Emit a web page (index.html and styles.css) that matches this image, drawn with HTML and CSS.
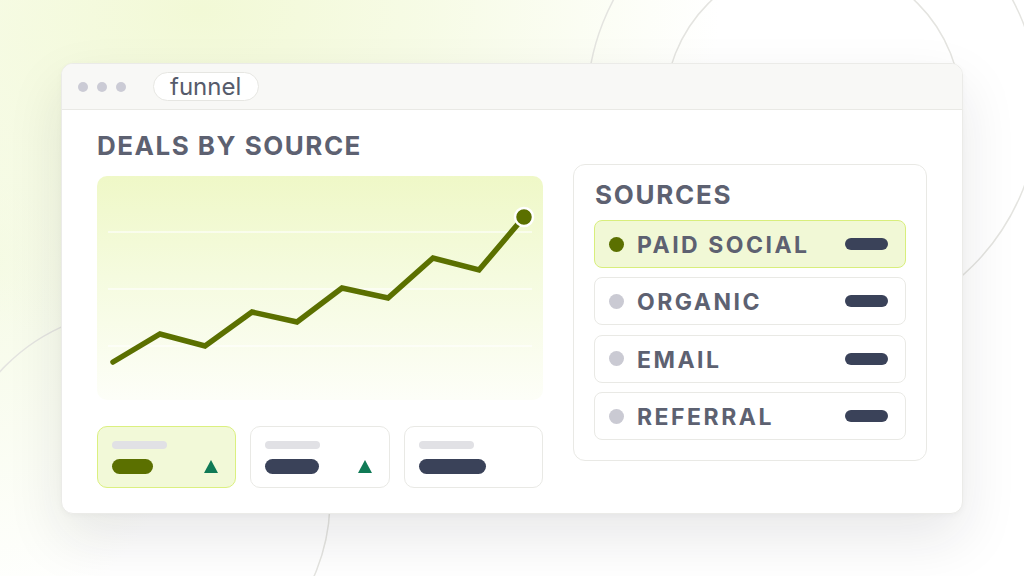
FILE: index.html
```html
<!DOCTYPE html>
<html lang="en">
<head>
<meta charset="utf-8">
<title>Deals by source</title>
<link rel="stylesheet" href="styles.css">
</head>
<body>
<svg class="bg-rings" width="1024" height="576" viewBox="0 0 1024 576" aria-hidden="true">
  <circle cx="813" cy="106" r="226" />
  <circle cx="813" cy="108" r="148" />
  <circle cx="140" cy="500" r="190" />
</svg>
<div class="stage">
  <div class="window">
    <div class="titlebar">
      <span class="dot"></span><span class="dot"></span><span class="dot"></span>
      <span class="tab">funnel</span>
    </div>
    <div class="body">
      <div class="left">
        <h1 class="heading">DEALS BY SOURCE</h1>
        <div class="chart">
          <svg width="446" height="224" viewBox="0 0 446 224">
            <line class="grid" x1="11" y1="56" x2="435" y2="56"/>
            <line class="grid" x1="11" y1="113" x2="435" y2="113"/>
            <line class="grid" x1="11" y1="170" x2="435" y2="170"/>
            <polyline class="trend" points="16,186 63,158 108,170 155,136 200,146 245,112 291,122 336,82 382,94 427,41"/>
            <circle class="end" cx="427" cy="41" r="9"/>
          </svg>
        </div>
        <div class="stats">
          <div class="stat active">
            <span class="stat-label"></span>
            <div class="stat-row"><span class="stat-value olive w41"></span><span class="up"></span></div>
          </div>
          <div class="stat">
            <span class="stat-label"></span>
            <div class="stat-row"><span class="stat-value w54"></span><span class="up"></span></div>
          </div>
          <div class="stat">
            <span class="stat-label"></span>
            <div class="stat-row"><span class="stat-value w67"></span></div>
          </div>
        </div>
      </div>
      <div class="panel">
        <h2 class="panel-title">SOURCES</h2>
        <ul class="sources">
          <li class="source active"><span class="bullet"></span><span class="name">PAID SOCIAL</span><span class="bar"></span></li>
          <li class="source"><span class="bullet"></span><span class="name">ORGANIC</span><span class="bar"></span></li>
          <li class="source"><span class="bullet"></span><span class="name">EMAIL</span><span class="bar"></span></li>
          <li class="source"><span class="bullet"></span><span class="name">REFERRAL</span><span class="bar"></span></li>
        </ul>
      </div>
    </div>
  </div>
</div>
</body>
</html>
```
FILE: styles.css
```css
* { box-sizing: border-box; }
html, body { margin: 0; padding: 0; }
body {
  width: 1024px;
  height: 576px;
  overflow: hidden;
  position: relative;
  font-family: Inter, "Noto Sans", "Liberation Sans", sans-serif;
  background:
    radial-gradient(ellipse 520px 340px at 200px 10px, #f2f9d6 0%, rgba(244,250,222,0.75) 45%, rgba(255,255,255,0) 100%),
    radial-gradient(ellipse 220px 360px at 0px 260px, rgba(244,250,226,0.85) 0%, rgba(255,255,255,0) 100%),
    #ffffff;
}
.bg-rings {
  position: absolute;
  left: 0;
  top: 0;
  z-index: 0;
}
.bg-rings circle {
  fill: none;
  stroke: #e4e4e0;
  stroke-width: 1.5;
}
.stage {
  position: relative;
  z-index: 1;
  padding: 63px 0 0 61px;
}
.window {
  width: 902px;
  height: 451px;
  background: #ffffff;
  border: 1px solid #ebebe8;
  border-radius: 12px;
  box-shadow: 0 24px 56px rgba(30, 30, 40, 0.10), 0 2px 6px rgba(30, 30, 40, 0.03);
  display: flex;
  flex-direction: column;
  overflow: hidden;
}
.titlebar {
  height: 46px;
  flex: none;
  background: #f8f8f6;
  border-bottom: 1px solid #e9e9e5;
  display: flex;
  align-items: center;
  padding-left: 16px;
  gap: 9px;
}
.dot {
  width: 10px;
  height: 10px;
  border-radius: 50%;
  background: #cbcbd5;
}
.tab {
  margin-left: 18px;
  height: 29px;
  padding: 0 17px 0 16px;
  border: 1.5px solid #e6e6e2;
  border-radius: 15px;
  background: #ffffff;
  font-size: 24px;
  line-height: 26px;
  color: #565b6b;
  display: flex;
  align-items: center;
}
.body {
  flex: 1;
  display: grid;
  grid-template-columns: 446px 354px;
  column-gap: 30px;
  padding: 0 35px;
}
.heading {
  margin: 20px 0 14px;
  font-size: 26px;
  line-height: 32px;
  font-weight: 700;
  letter-spacing: 1.5px;
  color: #5d6171;
}
.chart {
  height: 224px;
  border-radius: 10px;
  background: linear-gradient(180deg, #eff8c7 0%, #f5fbdf 45%, #fdfef8 100%);
  overflow: hidden;
}
.chart svg { display: block; }
.grid {
  stroke: #ffffff;
  stroke-opacity: 0.75;
  stroke-width: 1.5;
}
.trend {
  fill: none;
  stroke: #5b7000;
  stroke-width: 5.5;
  stroke-linejoin: miter;
  stroke-linecap: round;
}
.end {
  fill: #5b7000;
  stroke: #ffffff;
  stroke-width: 2.5;
}
.stats {
  margin-top: 26px;
  display: grid;
  grid-template-columns: repeat(3, 1fr);
  gap: 14px;
}
.stat {
  height: 62px;
  border: 1.5px solid #e9e9e5;
  border-radius: 10px;
  background: #ffffff;
  padding: 14px 17px 0 14px;
  display: flex;
  flex-direction: column;
}
.stat.active {
  background: #f2f9d8;
  border-color: #dbf080;
}
.stat-label {
  width: 55px;
  height: 8px;
  border-radius: 4px;
  background: #e1e1e5;
}
.stat-row {
  margin-top: 10px;
  display: flex;
  align-items: center;
  justify-content: space-between;
}
.stat-value {
  height: 15px;
  border-radius: 8px;
  background: #3a4259;
}
.stat-value.olive { background: #5b7000; }
.w41 { width: 41px; }
.w54 { width: 54px; }
.w67 { width: 67px; }
.up {
  width: 0;
  height: 0;
  border-left: 7.5px solid transparent;
  border-right: 7.5px solid transparent;
  border-bottom: 13px solid #107a56;
}
.panel {
  margin-top: 54px;
  align-self: start;
  border: 1px solid #e9e9e5;
  border-radius: 12px;
  padding: 14px 20px 20px 20px;
}
.panel-title {
  margin: 0 0 9px 1px;
  font-size: 26px;
  line-height: 32px;
  font-weight: 700;
  letter-spacing: 1.7px;
  color: #5d6171;
}
.sources {
  list-style: none;
  margin: 0;
  padding: 0;
  display: flex;
  flex-direction: column;
  gap: 9.4px;
}
.source {
  height: 48px;
  border: 1.5px solid #e9e9e5;
  border-radius: 8px;
  background: #ffffff;
  display: flex;
  align-items: center;
  padding: 2px 17px 0 14px;
}
.source.active {
  background: #f1f8d6;
  border-color: #d8ee7c;
}
.bullet {
  width: 15px;
  height: 15px;
  border-radius: 50%;
  background: #cacad3;
  flex: none;
  margin-top: -2px;
}
.source.active .bullet { background: #5b7000; }
.name {
  margin-left: 13px;
  font-size: 23px;
  font-weight: 700;
  letter-spacing: 2.5px;
  color: #5d6171;
}
.bar {
  margin-left: auto;
  margin-top: -2px;
  width: 43px;
  height: 12px;
  border-radius: 6px;
  background: #3a4259;
}
```
